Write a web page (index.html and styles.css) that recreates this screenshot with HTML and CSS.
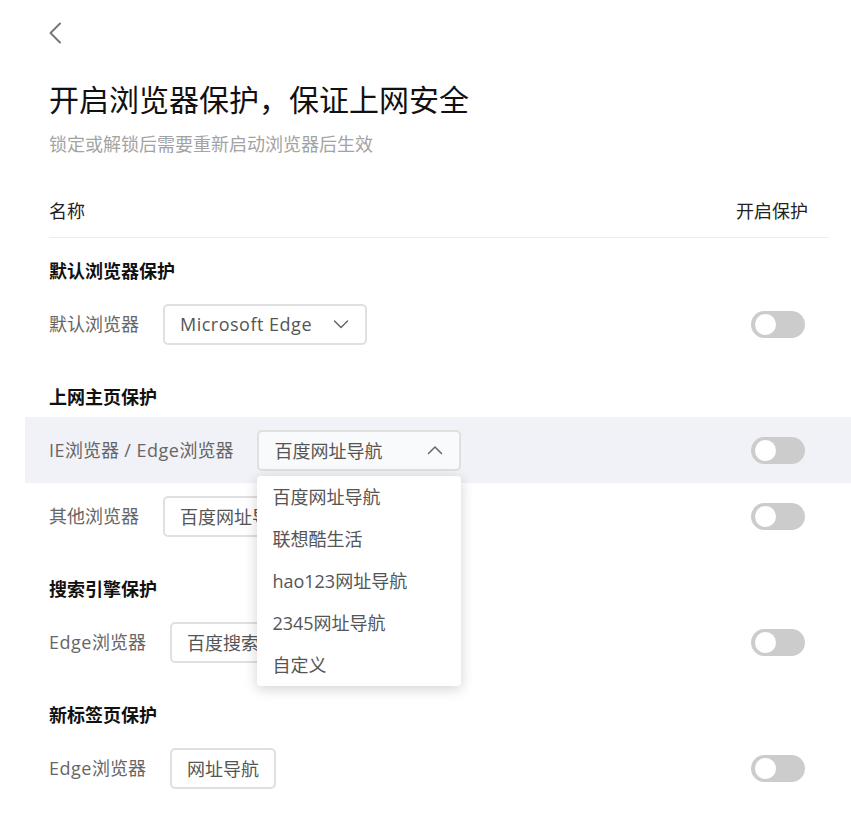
FILE: index.html
```html
<!DOCTYPE html>
<html lang="zh-CN">
<head>
  <meta charset="UTF-8" />
  <meta name="viewport" content="width=device-width, initial-scale=1.0"/>
  <title>浏览器保护</title>
  <link rel="stylesheet" href="styles.css">
</head>
<body>
  <main class="page">
    <div class="back">
      <svg width="14" height="22" viewBox="0 0 14 22"><path d="M12 1.5 L2.5 11 L12 20.5" fill="none" stroke="#777" stroke-width="2" stroke-linecap="round" stroke-linejoin="round"/></svg>
    </div>

    <h1 class="title">开启浏览器保护，保证上网安全</h1>
    <p class="subtitle">锁定或解锁后需要重新启动浏览器后生效</p>

    <div class="list-head">
      <span>名称</span>
      <span>开启保护</span>
    </div>

    <section class="group">
      <h2 class="group-title">默认浏览器保护</h2>
      <div class="row">
        <span class="label">默认浏览器</span>
        <div class="select wide">
          <span class="latin">Microsoft Edge</span>
          <svg class="caret" width="16" height="10" viewBox="0 0 16 10"><path d="M1.5 2 L8 8.5 L14.5 2" fill="none" stroke="#666" stroke-width="1.5" stroke-linecap="round" stroke-linejoin="round"/></svg>
        </div>
        <span class="toggle"></span>
      </div>
    </section>

    <section class="group">
      <h2 class="group-title">上网主页保护</h2>
      <div class="row active">
        <span class="label"><span class="latin">IE</span>浏览器<span class="latin"> / Edge</span>浏览器</span>
        <div class="select wide open">
          <span>百度网址导航</span>
          <svg class="caret" width="16" height="10" viewBox="0 0 16 10"><path d="M1.5 8.5 L8 2 L14.5 8.5" fill="none" stroke="#666" stroke-width="1.5" stroke-linecap="round" stroke-linejoin="round"/></svg>
          <ul class="menu">
            <li>百度网址导航</li>
            <li>联想酷生活</li>
            <li>hao123网址导航</li>
            <li>2345网址导航</li>
            <li>自定义</li>
          </ul>
        </div>
        <span class="toggle"></span>
      </div>
      <div class="row">
        <span class="label">其他浏览器</span>
        <div class="select wide">
          <span>百度网址导航</span>
          <svg class="caret" width="16" height="10" viewBox="0 0 16 10"><path d="M1.5 2 L8 8.5 L14.5 2" fill="none" stroke="#666" stroke-width="1.5" stroke-linecap="round" stroke-linejoin="round"/></svg>
        </div>
        <span class="toggle"></span>
      </div>
    </section>

    <section class="group">
      <h2 class="group-title">搜索引擎保护</h2>
      <div class="row">
        <span class="label"><span class="latin">Edge</span>浏览器</span>
        <div class="select wide">
          <span>百度搜索</span>
          <svg class="caret" width="16" height="10" viewBox="0 0 16 10"><path d="M1.5 2 L8 8.5 L14.5 2" fill="none" stroke="#666" stroke-width="1.5" stroke-linecap="round" stroke-linejoin="round"/></svg>
        </div>
        <span class="toggle"></span>
      </div>
    </section>

    <section class="group">
      <h2 class="group-title">新标签页保护</h2>
      <div class="row">
        <span class="label"><span class="latin">Edge</span>浏览器</span>
        <div class="select">
          <span>网址导航</span>
        </div>
        <span class="toggle"></span>
      </div>
    </section>
  </main>
</body>
</html>
```

FILE: styles.css
```css
* {
  box-sizing: border-box;
}

html, body {
  margin: 0;
  overflow: hidden;
}

body {
  font-family: "Open Sans", "Noto Sans CJK SC", sans-serif;
  background: #ffffff;
  color: #333;
}

.page {
  padding: 22px 22px 0 49px;
}

.back {
  height: 22px;
  margin-left: -1px;
}

.back svg {
  display: block;
}

.title {
  margin: 36px 0 0;
  font-size: 30px;
  line-height: 40px;
  font-weight: 400;
  color: #111;
}

.subtitle {
  margin: 12px 0 0;
  font-size: 18px;
  line-height: 24px;
  color: #a3a3a3;
}

.list-head {
  display: flex;
  justify-content: space-between;
  margin-top: 43px;
  padding-right: 21px;
  padding-bottom: 14px;
  border-bottom: 1px solid #ececec;
  font-size: 18px;
  line-height: 24px;
  color: #222;
}

.group-title {
  margin: 0;
  padding: 28px 0 8px;
  font-size: 18px;
  line-height: 24px;
  font-weight: 700;
  color: #111;
}

.group:first-of-type .group-title {
  padding-top: 21px;
}

.row {
  display: flex;
  align-items: center;
  gap: 24px;
  height: 66px;
  margin: 0 -22px 0 -24px;
  padding: 0 46px 0 24px;
  font-size: 18px;
  color: #666;
}

.row.active {
  background: #f0f2f7;
}

.label {
  line-height: 24px;
}

/* latin glyphs run a bit wider in the original UI font */
.latin {
  letter-spacing: 0.5px;
}

.select {
  position: relative;
  display: flex;
  align-items: center;
  justify-content: space-between;
  height: 41px;
  padding: 0 15px;
  border: 2px solid #e0e0e0;
  border-radius: 5px;
  background: #fff;
  color: #555;
}

.select.wide {
  width: 204px;
}

.row.active .select {
  background: #f9fafc;
}

.caret {
  display: block;
  margin-right: 1px;
}

.menu {
  position: absolute;
  top: 44px;
  left: -2px;
  z-index: 5;
  width: 204px;
  margin: 0;
  padding: 0;
  list-style: none;
  background: #fff;
  border-radius: 4px;
  box-shadow: 0 3px 14px rgba(0, 0, 0, 0.18);
}

.menu li {
  height: 42px;
  line-height: 42px;
  padding-left: 15px;
  color: #555;
}

.toggle {
  position: relative;
  margin-left: auto;
  width: 54px;
  height: 27px;
  border-radius: 14px;
  background: #cccccc;
}

.toggle::after {
  content: "";
  position: absolute;
  top: 3px;
  left: 4px;
  width: 21px;
  height: 21px;
  border-radius: 50%;
  background: #fff;
}
```
